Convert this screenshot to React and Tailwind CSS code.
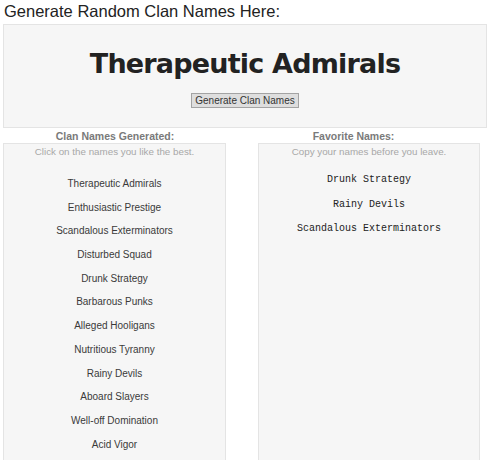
export default function App() {
  const names = [
    "Therapeutic Admirals",
    "Enthusiastic Prestige",
    "Scandalous Exterminators",
    "Disturbed Squad",
    "Drunk Strategy",
    "Barbarous Punks",
    "Alleged Hooligans",
    "Nutritious Tyranny",
    "Rainy Devils",
    "Aboard Slayers",
    "Well-off Domination",
    "Acid Vigor",
  ];
  const favs = ["Drunk Strategy", "Rainy Devils", "Scandalous Exterminators"];
  return (
    <div className="w-[492px] h-[460px] overflow-hidden bg-white font-['Liberation_Sans',Arial,sans-serif]">
      <div className="pl-[4px] text-[16.5px] leading-[22px] text-[#222]">Generate Random Clan Names Here:</div>
      <div className="mt-[2px] ml-[3px] w-[484px] h-[104px] border border-[#e4e4e4] bg-[#f6f6f6] flex flex-col items-center">
        <div className="mt-[23px] font-['DejaVu_Sans',Verdana,sans-serif] font-bold text-[27px] leading-[32px] tracking-[-0.8px] text-[#222]">
          Therapeutic Admirals
        </div>
        <button className="mt-[13px] w-[108px] h-[15px] border border-[#a3a3a3] bg-[#dedede] text-[10px] leading-[13px] text-[#333] font-['Liberation_Sans',Arial,sans-serif]">
          Generate Clan Names
        </button>
      </div>
      <div className="flex mt-[1px]">
        <div className="w-[227px] pl-[3px] flex flex-col">
          <div className="text-center text-[10.5px] leading-[14px] font-bold text-[#7a7a7a]">Clan Names Generated:</div>
          <div className="w-[223px] h-[330px] border border-[#e4e4e4] bg-[#f6f6f6] flex flex-col items-center">
            <div className="mt-[1px] text-[9.8px] leading-[14px] text-[#a8a8a8]">Click on the names you like the best.</div>
            <div className="mt-[18px] flex flex-col items-center gap-[9.7px]">
              {names.map((n) => (
                <div key={n} className="text-[10px] leading-[14px] text-[#3a3a3a]">{n}</div>
              ))}
            </div>
          </div>
        </div>
        <div className="w-[252px] pl-[3px] flex flex-col">
          <div className="text-center text-[10.5px] leading-[14px] font-bold text-[#7a7a7a] pr-[2px]">Favorite Names:</div>
          <div className="ml-[28px] w-[222px] h-[330px] border border-[#e4e4e4] bg-[#f6f6f6] flex flex-col items-center">
            <div className="mt-[1px] text-[9.8px] leading-[14px] text-[#a8a8a8]">Copy your names before you leave.</div>
            <div className="mt-[14px] flex flex-col items-center gap-[10.5px]">
              {favs.map((n) => (
                <div key={n} className="font-['Liberation_Mono','Courier_New',monospace] text-[10px] leading-[14px] text-[#222]">{n}</div>
              ))}
            </div>
          </div>
        </div>
      </div>
    </div>
  );
}
